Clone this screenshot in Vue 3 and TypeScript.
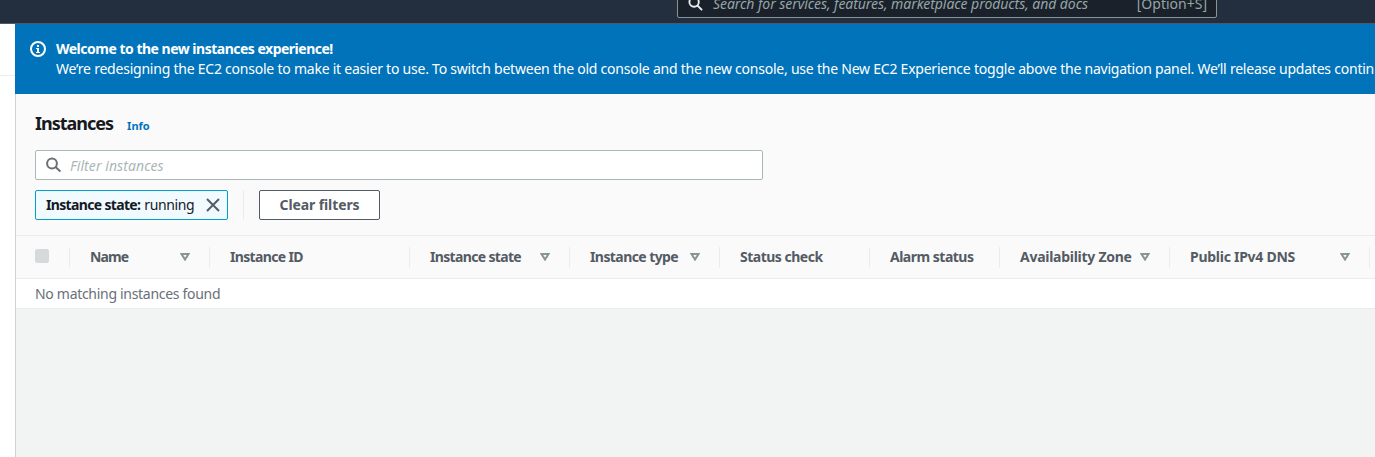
<script setup lang="ts">
interface Column {
  label: string
  width: number
  sortable: boolean
  tracking: number
}

const columns: Column[] = [
  { label: 'Name', width: 140, sortable: true, tracking: -0.9 },
  { label: 'Instance ID', width: 200, sortable: false, tracking: -0.66 },
  { label: 'Instance state', width: 160, sortable: true, tracking: -0.66 },
  { label: 'Instance type', width: 150, sortable: true, tracking: -0.58 },
  { label: 'Status check', width: 150, sortable: false, tracking: -0.5 },
  { label: 'Alarm status', width: 130, sortable: false, tracking: -0.5 },
  { label: 'Availability Zone', width: 170, sortable: true, tracking: -0.27 },
  { label: 'Public IPv4 DNS', width: 200, sortable: true, tracking: -0.27 },
]
</script>

<template>
  <div class="page">
    <header class="topbar">
      <div class="global-search">
        <svg class="global-icon" viewBox="0 0 16 16" width="15" height="15">
          <circle cx="6.5" cy="6.5" r="5" />
          <path d="M10.2 10.2 15 15" />
        </svg>
        <span class="global-placeholder">Search for services, features, marketplace products, and docs</span>
        <span class="shortcut">[Option+S]</span>
      </div>
    </header>
    <div class="body">
      <aside class="side"><div class="side-head"></div></aside>
      <main class="content">
        <section class="banner">
          <svg class="info-icon" viewBox="0 0 16 16" width="16" height="16">
            <circle cx="8" cy="8" r="7" fill="none" stroke="#fff" stroke-width="2" />
            <path d="M7 4h2v2H7zM6 7h3v4h1v1H6v-1h1V8H6z" fill="#fff" />
          </svg>
          <div class="banner-text">
            <div><strong class="banner-title">Welcome to the new instances experience!</strong></div>
            <div><span class="banner-desc">We’re redesigning the EC2 console to make it easier to use. To switch between the old console and the new console, use the New EC2 Experience toggle above the navigation panel. We’ll release updates contin</span></div>
          </div>
        </section>
        <section class="tools">
          <div class="heading">
            <h1>Instances</h1>
            <a class="info">Info</a>
          </div>
          <div class="filter">
            <svg class="filter-icon" viewBox="0 0 16 16" width="16" height="16">
              <circle cx="6" cy="6.5" r="4.9" />
              <path d="M9.6 10 14.4 14.5" />
            </svg>
            <span class="filter-placeholder">Filter instances</span>
          </div>
          <div class="tokens">
            <div class="token">
              <b>Instance state:</b><span class="token-value">running</span>
              <svg class="close" viewBox="0 0 14 14" width="14" height="14">
                <path d="M1 1 13 13M13 1 1 13" />
              </svg>
            </div>
            <i class="divider"></i>
            <button class="clear"><span>Clear filters</span></button>
          </div>
        </section>
        <section class="thead">
          <div class="check-cell"><i class="checkbox"></i></div>
          <div v-for="c in columns" :key="c.label" class="th" :style="{ width: c.width + 'px' }">
            <span class="th-label" :style="{ letterSpacing: c.tracking + 'px' }">{{ c.label }}</span>
            <svg v-if="c.sortable" class="sort" viewBox="0 0 10 8" width="10" height="8">
              <path d="M1.5 1h7L5 6.6z" />
            </svg>
          </div>
        </section>
        <div class="empty"><span>No matching instances found</span></div>
      </main>
    </div>
  </div>
</template>

<style>
body {
  overflow: hidden;
}
</style>

<style scoped>
.page {
  width: 1375px;
  height: 457px;
  overflow: hidden;
  display: flex;
  flex-direction: column;
  font-family: "Noto Sans", "Open Sans", sans-serif;
  font-size: 14px;
  line-height: 20px;
  color: #16191f;
  white-space: nowrap;
}
.page * {
  box-sizing: border-box;
}
svg {
  flex: none;
}
.topbar {
  height: 24px;
  flex: none;
  background: #232f3e;
  border-bottom: 1px solid #4e5968;
  display: flex;
  align-items: flex-end;
  padding: 0 0 5px 677px;
}
.global-search {
  width: 540px;
  height: 32px;
  flex: none;
  background: #1a212b;
  border: 1px solid #879596;
  border-radius: 2px;
  display: flex;
  align-items: center;
  padding: 4px 9px 0 10px;
}
.global-icon {
  margin-bottom: 2px;
  fill: none;
  stroke: #eaeded;
  stroke-width: 2;
}
.global-placeholder {
  margin-left: 10px;
  font-style: italic;
  color: #95a5a6;
  letter-spacing: -0.06px;
}
.shortcut {
  margin-left: auto;
  color: #95a5a6;
}
.body {
  flex: 1;
  display: flex;
}
.side {
  width: 15px;
  flex: none;
  background: #fff;
}
.side-head {
  height: 52px;
  border-bottom: 1px solid #eaeded;
}
.content {
  width: 1360px;
  flex: none;
  background: #f2f4f4;
  box-shadow: inset 1px 0 #ccd1d1;
}
.banner {
  height: 70px;
  background: #0073bb;
  color: #fff;
  display: flex;
  padding: 15px 0 0 15px;
  overflow: hidden;
}
.info-icon {
  margin-top: 2px;
}
.banner-text {
  margin-left: 10px;
}
.banner-title {
  letter-spacing: -0.5px;
}
.banner-desc {
  letter-spacing: -0.23px;
}
.tools {
  height: 141px;
  margin-left: 1px;
  background: #fafafa;
  padding: 17px 0 0 19px;
}
.heading {
  display: flex;
  align-items: baseline;
  height: 39px;
  line-height: 24px;
}
h1 {
  margin: 0;
  font-size: 18px;
  font-weight: 700;
  line-height: 24px;
  letter-spacing: -1px;
}
.info {
  margin-left: 14px;
  font-size: 11px;
  font-weight: 700;
  color: #0073bb;
}
.filter {
  width: 728px;
  height: 30px;
  background: #fff;
  border: 1px solid #aab7b8;
  border-radius: 2px;
  display: flex;
  align-items: center;
  padding-left: 10px;
}
.filter-icon {
  fill: none;
  stroke: #687078;
  stroke-width: 2;
}
.filter-placeholder {
  margin: 2px 0 0 8px;
  font-style: italic;
  color: #aab7b8;
  letter-spacing: 0.07px;
}
.tokens {
  display: flex;
  margin-top: 10px;
}
.token {
  width: 193px;
  height: 30px;
  border: 1px solid #00a1c9;
  border-radius: 2px;
  background: #f1faff;
  display: flex;
  align-items: center;
  padding: 0 7px 0 10px;
}
.token b {
  letter-spacing: -0.66px;
}
.token-value {
  margin-left: 4px;
  letter-spacing: -0.4px;
}
.close {
  margin-left: auto;
  fill: none;
  stroke: #545b64;
  stroke-width: 2;
}
.divider {
  width: 1px;
  height: 30px;
  margin: 0 15px;
  background: #eaeded;
}
.clear {
  width: 121px;
  height: 30px;
  padding: 0;
  border: 1px solid #545b64;
  border-radius: 2px;
  background: #fff;
  font: inherit;
  font-weight: 700;
  color: #545b64;
  letter-spacing: -0.1px;
}
.thead {
  height: 44px;
  margin-left: 1px;
  background: #fafafa;
  border-top: 1px solid #eaeded;
  border-bottom: 1px solid #eaeded;
  display: flex;
  align-items: center;
}
.check-cell {
  width: 54px;
  height: 21px;
  flex: none;
  padding: 2px 0 0 19px;
  border-right: 1px solid #eaeded;
}
.checkbox {
  display: block;
  width: 14px;
  height: 14px;
  border-radius: 2px;
  background: #d5dbdb;
}
.th {
  height: 21px;
  flex: none;
  display: flex;
  align-items: center;
  justify-content: space-between;
  padding: 0 19px 0 20px;
  border-right: 1px solid #eaeded;
  color: #545b64;
}
.th-label {
  font-weight: 700;
}
.sort {
  fill: none;
  stroke: #879596;
  stroke-width: 2;
}
.empty {
  height: 30px;
  margin-left: 1px;
  padding: 5px 0 0 19px;
  background: #fff;
  border-bottom: 1px solid #eaeded;
  color: #687078;
  letter-spacing: -0.3px;
}
</style>
